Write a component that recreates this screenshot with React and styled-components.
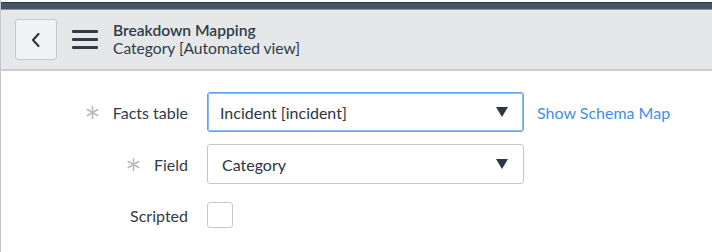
import React from "react";
import styled, { createGlobalStyle } from "styled-components";

const Global = createGlobalStyle`
  html, body { margin: 0; padding: 0; background: #fff; }
  body { font-family: Lato, "Noto Sans", sans-serif; width: 712px; height: 252px; overflow: hidden; }
`;

const Page = styled.div`
  height: 252px;
  border-left: 1px solid #c3c7cc;
  padding-top: 2px;
  box-sizing: border-box;
`;

const TopStrip = styled.div`
  height: 6px;
  background: #465667;
  border-top: 1px solid #2c3846;
  border-bottom: 1px solid #8a96a3;
`;

const Header = styled.header`
  height: 59px;
  background: #e6e7e9;
  border-bottom: 2px solid #cbccd0;
  display: flex;
  align-items: center;
  padding-left: 14px;
`;

const BackButton = styled.button`
  width: 42px;
  height: 41px;
  box-sizing: border-box;
  border: 1px solid #c6c8cb;
  border-radius: 3px;
  background: #f1f2f3;
  display: flex;
  align-items: center;
  justify-content: center;
  padding: 0;
  margin-right: 15px;
`;

const Burger = styled.div`
  display: flex;
  flex-direction: column;
  gap: 4.5px;
  width: 26px;
  margin-right: 15px;
`;

const Bar = styled.span`
  display: block;
  height: 3.5px;
  border-radius: 1px;
  background: #2f3d4b;
`;

const Titles = styled.div`
  display: flex;
  flex-direction: column;
  color: #2e3c4a;
  font-size: 15.6px;
  line-height: 18px;
  margin-top: -2px;
`;

const Title = styled.div`
  font-weight: 600;
`;

const Subtitle = styled.div`
  font-weight: 400;
`;

const Form = styled.div`
  padding-top: 21px;
  display: flex;
  flex-direction: column;
  gap: 12px;
`;

const Row = styled.div`
  display: flex;
  align-items: center;
  height: ${(p) => p.$h || 40}px;
`;

const Label = styled.label`
  width: 187px;
  display: flex;
  align-items: center;
  justify-content: flex-end;
  font-size: 16px;
  color: #313c47;
  margin-right: 19px;
`;

const Mandatory = styled.span`
  display: inline-flex;
  margin-right: 14px;
`;

const Select = styled.div`
  width: 317px;
  height: 40px;
  box-sizing: border-box;
  border: 1px solid ${(p) => (p.$focused ? "#5fa1f2" : "#c4c6c9")};
  box-shadow: ${(p) => (p.$focused ? "0 0 0 1px #8dbcf5 inset" : "none")};
  border-radius: 3px;
  background: #fff;
  display: flex;
  align-items: center;
  justify-content: space-between;
  padding: 0 15px 0 ${(p) => (p.$focused ? 12 : 14)}px;
  font-size: 16px;
  color: #2b3540;
`;

const Link = styled.a`
  margin-left: 13px;
  font-size: 16px;
  color: #3f8fe9;
  text-decoration: none;
`;

const Checkbox = styled.span`
  width: 26px;
  height: 26px;
  box-sizing: border-box;
  border: 1px solid #c8c9cc;
  border-radius: 3px;
  background: #fff;
`;

const Arrow = () => (
  <svg width="12" height="10" viewBox="0 0 12 10">
    <polygon points="0,0 12,0 6,10" fill="#2c3845" />
  </svg>
);

const Star = () => (
  <svg width="13" height="13" viewBox="0 0 13 13">
    <g stroke="#b6bbc1" strokeWidth="1.6" strokeLinecap="round">
      <line x1="6.5" y1="0.5" x2="6.5" y2="12.5" />
      <line x1="1.3" y1="3.5" x2="11.7" y2="9.5" />
      <line x1="1.3" y1="9.5" x2="11.7" y2="3.5" />
    </g>
  </svg>
);

export default function App() {
  return (
    <>
      <Global />
      <Page>
        <TopStrip />
        <Header>
          <BackButton aria-label="Back">
            <svg width="12" height="16" viewBox="0 0 12 16">
              <polyline points="8.5,2 3,8 8.5,14" fill="none" stroke="#2c3845" strokeWidth="2.2" strokeLinecap="round" strokeLinejoin="round" />
            </svg>
          </BackButton>
          <Burger>
            <Bar />
            <Bar />
            <Bar />
          </Burger>
          <Titles>
            <Title>Breakdown Mapping</Title>
            <Subtitle>Category [Automated view]</Subtitle>
          </Titles>
        </Header>
        <Form>
          <Row>
            <Label>
              <Mandatory><Star /></Mandatory>Facts table
            </Label>
            <Select $focused>
              <span>Incident [incident]</span>
              <Arrow />
            </Select>
            <Link href="#">Show Schema Map</Link>
          </Row>
          <Row>
            <Label>
              <Mandatory><Star /></Mandatory>Field
            </Label>
            <Select>
              <span>Category</span>
              <Arrow />
            </Select>
          </Row>
          <Row $h={38}>
            <Label>Scripted</Label>
            <Checkbox />
          </Row>
        </Form>
      </Page>
    </>
  );
}
